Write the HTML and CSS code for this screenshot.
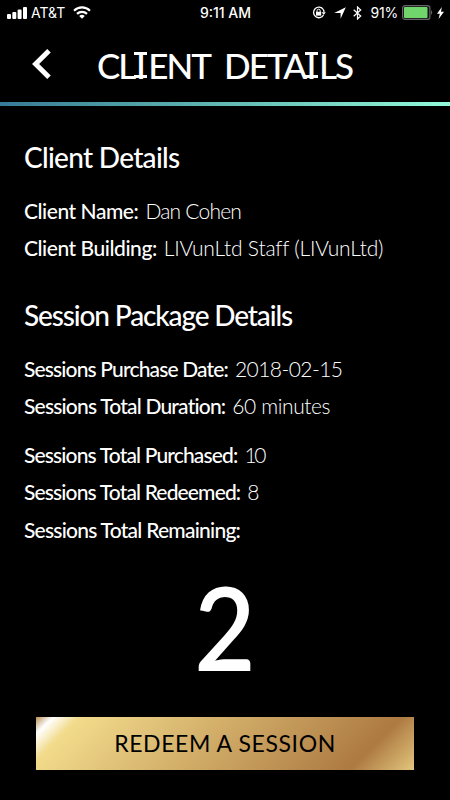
FILE: index.html
```html
<!DOCTYPE html>
<html>

<head>
    <meta charset="utf-8" />
    <meta name="viewport" content="width=device-width, initial-scale=1.0">
    <title>Client Details</title>
    <link rel="stylesheet" href="styles.css">
</head>

<body>
    <div class="statusBar">
        <div class="statusLeft">
            <svg class="signal" width="20" height="12" viewBox="0 0 20 12" fill="#fff">
                <rect x="0" y="7" width="4" height="5" rx="1" />
                <rect x="5.3" y="5" width="4" height="7" rx="1" />
                <rect x="10.6" y="2.5" width="4" height="9.5" rx="1" />
                <rect x="16" y="0" width="4" height="12" rx="1" />
            </svg>
            <span class="carrier">AT&amp;T</span>
            <svg class="wifi" width="18" height="13" viewBox="0 0 18 13" fill="none" stroke="#fff" stroke-width="2.2">
                <path d="M1 4.7a11.5 11.5 0 0 1 16 0" />
                <path d="M4 7.9a7.2 7.2 0 0 1 10 0" />
                <path d="M6.2 10.1a4 4 0 0 1 5.6 0L9 12.8z" fill="#fff" stroke="none" />
            </svg>
        </div>
        <div class="clock">9:11 AM</div>
        <div class="statusRight">
            <svg width="14" height="13" viewBox="0 0 14 13" fill="none" stroke="#fff" stroke-width="1.3">
                <path d="M11.3 3.5A5.3 5.3 0 1 0 11.5 9" />
                <path d="M9.6 6.2h4.2L11.8 9z" fill="#fff" stroke="none" />
                <path d="M11.2 3.3a5.3 5.3 0 0 1 .8 3" />
                <rect x="4" y="5.8" width="5.2" height="3.8" fill="#fff" stroke="none" />
                <path d="M5 6V4.8a1.6 1.6 0 0 1 3.2 0V6" stroke-width="1" />
            </svg>
            <svg class="arrow" width="12" height="12" viewBox="0 0 12 12" fill="#fff">
                <path d="M11.8 .2L6.6 11.8V5.9H.2z" />
            </svg>
            <svg class="bluetooth" width="9" height="14" viewBox="0 0 9 14" fill="none" stroke="#fff" stroke-width="1.2">
                <path d="M.7 3.8l7 6.2-3.2 3V1l3.2 3-7 6.2" />
            </svg>
            <span class="percent">91%</span>
            <svg class="battery" width="32" height="15" viewBox="0 0 32 15">
                <rect x=".6" y=".6" width="27.3" height="13.8" rx="2.5" fill="#111" stroke="#666" stroke-width="1.2" />
                <rect x="2" y="2" width="23.5" height="11" rx="1" fill="#70d66b" />
                <path d="M29.2 5q2 2.5 0 5z" fill="#777" />
            </svg>
            <svg class="bolt" width="7" height="12" viewBox="0 0 7 12" fill="#fff">
                <path d="M4.8 0L0 6.8h2.8L1.6 12 7 4.8H4z" />
            </svg>
        </div>
    </div>
    <div class="header">
        <svg class="backBtn" width="20" height="30" viewBox="0 0 20 30" fill="none" stroke="#fff" stroke-width="5">
            <path d="M17 1.8L3.6 15 17 28.2" />
        </svg>
        <h1><span class="first">CL<span class="slab">I</span>ENT</span><span>DETA<span class="slab">I</span>LS</span></h1>
    </div>
    <div class="content">
        <h2>Client Details</h2>
        <p><b class="name">Client Name:</b><span class="nameVal">Dan Cohen</span></p>
        <p><b class="building">Client Building:</b><span class="buildingVal">LIVunLtd Staff (LIVunLtd)</span></p>
        <h2 class="package">Session Package Details</h2>
        <p><b class="date">Sessions Purchase Date:</b><span class="dateVal">2018-02-15</span></p>
        <p><b class="duration">Sessions Total Duration:</b><span class="durationVal">60 minutes</span></p>
        <p class="totals"><b class="purchased">Sessions Total Purchased:</b><span class="number">10</span></p>
        <p><b class="redeemed">Sessions Total Redeemed:</b><span class="number">8</span></p>
        <p><b class="remaining">Sessions Total Remaining:</b></p>
        <div class="remainingCount">2</div>
        <button class="redeemBtn">REDEEM A SESSION</button>
    </div>
</body>

</html>
```
FILE: styles.css
```css
* {
    box-sizing: border-box;
}

h1,
h2,
p,
body {
    margin: 0px;
    padding: 0px;
}

body {
    height: 800px;
    overflow: hidden;
    background-color: #000;
    color: white;
    font-family: Lato, sans-serif;
}

svg {
    display: block;
    flex: none;
}

.statusBar {
    height: 25px;
    padding: 0px 6px 0px 7px;
    display: grid;
    grid-template-columns: 1fr auto 1fr;
    align-items: center;
    font: 14px/25px Inter, sans-serif;
}

.statusLeft,
.statusRight {
    display: flex;
    align-items: center;
}

.statusRight {
    justify-content: flex-end;
}

.carrier {
    margin: 0px 8px 0px 4px;
}

.clock {
    font-weight: 500;
}

.arrow {
    margin-left: 8px;
}

.bluetooth {
    margin-left: 7px;
}

.percent {
    margin: 0px 4px 0px 8px;
    letter-spacing: -0.2px;
}

.bolt {
    margin-left: 3px;
}

.header {
    height: 81px;
    display: flex;
    padding-left: 32px;
    border-bottom: 4px solid;
    border-image: linear-gradient(to right, #367b96, #62b9b2 50%, #92fad9) 1;
}

.backBtn {
    margin-top: 24px;
}

h1 {
    display: flex;
    margin-left: 45px;
    padding-top: 18px;
    font-size: 35px;
    line-height: 44px;
    font-weight: 500;
    letter-spacing: -2px;
}

.first {
    margin-right: 14px;
}

/* capital I with bars at both ends */
.slab {
    display: inline-block;
    width: 13px;
    margin-right: 1px;
    letter-spacing: 0px;
    text-align: center;
    background: linear-gradient(white, white) 0 9px / 100% 3px no-repeat, linear-gradient(white, white) 0 32px / 100% 3px no-repeat;
}

.content {
    padding: 31px 24px 0px 24px;
}

h2 {
    height: 38px;
    margin-bottom: 17px;
    font-size: 28px;
    line-height: 40px;
    font-weight: 500;
    letter-spacing: -0.7px;
}

.package {
    margin-top: 28px;
    letter-spacing: -1.13px;
}

p {
    height: 37.3px;
    font-size: 21px;
    line-height: 37px;
    font-weight: 300;
    white-space: nowrap;
}

p b {
    font-weight: 500;
    margin-right: 7px;
}

.name,
.building {
    letter-spacing: -0.45px;
}

.nameVal {
    letter-spacing: -0.8px;
}

.buildingVal {
    letter-spacing: -0.2px;
}

.date {
    letter-spacing: -0.85px;
}

.dateVal {
    letter-spacing: -0.55px;
}

.durationVal {
    letter-spacing: -0.4px;
}

.duration {
    letter-spacing: -0.8px;
}

.purchased,
.redeemed {
    letter-spacing: -0.85px;
}

.remaining {
    letter-spacing: -0.75px;
}

.number {
    letter-spacing: -2.5px;
}

.totals {
    margin-top: 12px;
}

.remainingCount {
    height: 169px;
    font-size: 115px;
    line-height: 157px;
    font-weight: 600;
    text-align: center;
    transform: scaleX(0.92);
}

.redeemBtn {
    display: block;
    width: 378px;
    height: 53px;
    margin-left: 12px;
    padding: 0px 0px 2px 0px;
    border-style: none;
    font: 400 23px Lato, sans-serif;
    letter-spacing: 0.6px;
    color: black;
    background: linear-gradient(135deg, #b98f55 0%, #fff 4%, #f2db8b 10%, #ad7a42 85%, #e3c67d 100%);
}
```
